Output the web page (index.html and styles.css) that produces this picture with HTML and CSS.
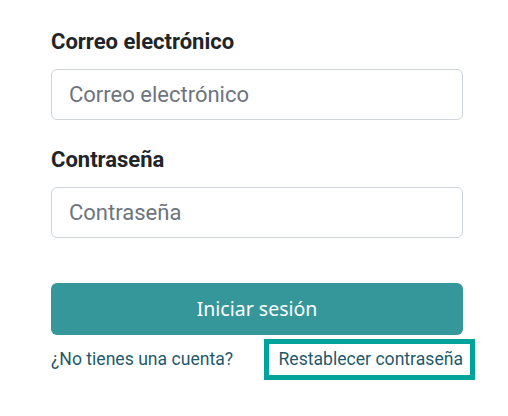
FILE: index.html
```html
<!DOCTYPE html>
<html lang="es">
<head>
<meta charset="utf-8">
<title>Iniciar sesión</title>
<link rel="stylesheet" href="styles.css">
</head>
<body>
<form class="login">
  <div class="field">
    <label class="label" for="email">Correo electrónico</label>
    <input class="input" id="email" type="email" placeholder="Correo electrónico">
  </div>
  <div class="field">
    <label class="label" for="pass">Contraseña</label>
    <input class="input" id="pass" type="password" placeholder="Contraseña">
  </div>
  <button class="submit" type="button">Iniciar sesión</button>
  <div class="links">
    <a class="link" href="#">¿No tienes una cuenta?</a>
    <a class="link reset" href="#">Restablecer contraseña</a>
  </div>
</form>
</body>
</html>
```
FILE: styles.css
```css
html, body {
  margin: 0;
  padding: 0;
  background: #ffffff;
}
body {
  min-height: 416px;
  font-family: Roboto, "Liberation Sans", sans-serif;
  color: #212529;
}
.login {
  width: 412px;
  padding: 29px 0 40px 51px;
  display: flex;
  flex-direction: column;
}
.field {
  display: flex;
  flex-direction: column;
  gap: 14px;
  margin-bottom: 27px;
}
.label {
  font-size: 22px;
  line-height: 26px;
  font-weight: 700;
  color: #212529;
}
.input {
  box-sizing: border-box;
  height: 51px;
  width: 100%;
  margin: 0;
  padding: 0 17px;
  border: 1px solid #ced4da;
  border-radius: 6px;
  font-family: Roboto, "Liberation Sans", sans-serif;
  font-size: 22px;
  line-height: 30px;
  color: #495057;
  background: #fff;
}
.input::placeholder {
  color: #6c757d;
  opacity: 1;
}
.submit {
  margin-top: 18px;
  height: 52px;
  width: 100%;
  border: 0;
  border-radius: 6px;
  background: #36979b;
  color: #ffffff;
  font-family: "Noto Sans", "Open Sans", sans-serif;
  font-size: 19.5px;
  line-height: 24px;
  padding: 0;
}
.links {
  margin-top: 12px;
  display: flex;
  justify-content: space-between;
  align-items: flex-start;
  font-size: 17.6px;
  line-height: 24px;
}
.link {
  color: #1f5a6a;
  text-decoration: none;
}
.reset {
  display: inline-block;
  padding: 3px 7px 4px 9px;
  margin: -3px -7px -4px -9px;
  outline: 5px solid #00a39a;
  outline-offset: 0;
}
```
